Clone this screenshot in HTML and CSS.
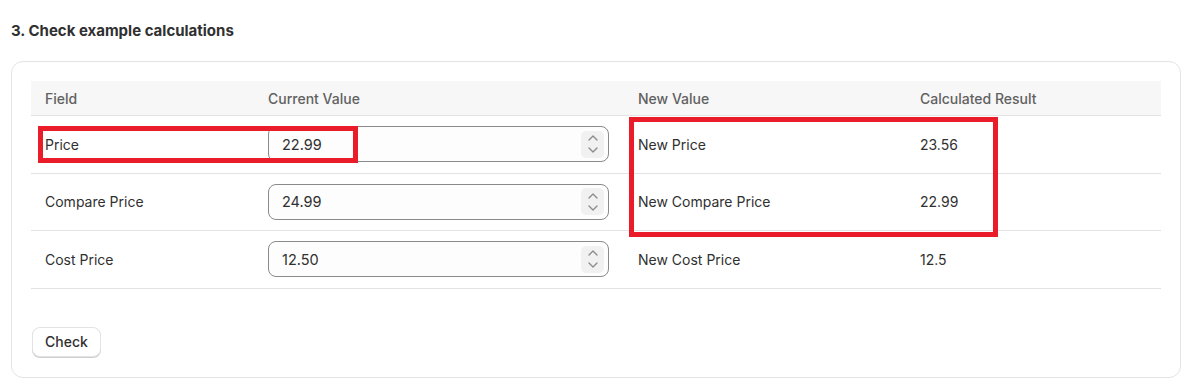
FILE: index.html
```html
<!DOCTYPE html>
<html lang="en">
<head>
    <meta charset="UTF-8">
    <title>Check example calculations</title>
    <link rel="stylesheet" href="styles.css">
</head>
<body>

    <!-- Step 3 -->
    <section class="step">
        <h2 class="step-title">3. Check example calculations</h2>

        <div class="card">
            <div class="table-wrap">
                <table class="calc-table">
                    <colgroup>
                        <col class="col-field">
                        <col class="col-current">
                        <col class="col-new">
                        <col>
                    </colgroup>
                    <thead>
                        <tr>
                            <th>Field</th>
                            <th>Current Value</th>
                            <th>New Value</th>
                            <th>Calculated Result</th>
                        </tr>
                    </thead>
                    <tbody>
                        <tr>
                            <td>Price</td>
                            <td>
                                <div class="num-field">
                                    <input type="text" value="22.99">
                                    <span class="spinner">
                                        <svg width="12" height="8" viewBox="0 0 12 8"><path d="M2 6l4-4 4 4"/></svg>
                                        <svg width="12" height="8" viewBox="0 0 12 8"><path d="M2 2l4 4 4-4"/></svg>
                                    </span>
                                </div>
                            </td>
                            <td>New Price</td>
                            <td>23.56</td>
                        </tr>
                        <tr>
                            <td>Compare Price</td>
                            <td>
                                <div class="num-field">
                                    <input type="text" value="24.99">
                                    <span class="spinner">
                                        <svg width="12" height="8" viewBox="0 0 12 8"><path d="M2 6l4-4 4 4"/></svg>
                                        <svg width="12" height="8" viewBox="0 0 12 8"><path d="M2 2l4 4 4-4"/></svg>
                                    </span>
                                </div>
                            </td>
                            <td>New Compare Price</td>
                            <td>22.99</td>
                        </tr>
                        <tr>
                            <td>Cost Price</td>
                            <td>
                                <div class="num-field">
                                    <input type="text" value="12.50">
                                    <span class="spinner">
                                        <svg width="12" height="8" viewBox="0 0 12 8"><path d="M2 6l4-4 4 4"/></svg>
                                        <svg width="12" height="8" viewBox="0 0 12 8"><path d="M2 2l4 4 4-4"/></svg>
                                    </span>
                                </div>
                            </td>
                            <td>New Cost Price</td>
                            <td>12.5</td>
                        </tr>
                    </tbody>
                </table>

                <!-- annotation boxes -->
                <div class="mark mark-price"></div>
                <div class="mark mark-result"></div>
            </div>

            <div class="actions">
                <button class="btn">Check</button>
            </div>
        </div>
    </section>

</body>
</html>
```

FILE: styles.css
```css
body {
    font-family: 'Inter', 'Liberation Sans', sans-serif;
    margin: 0;
    padding: 0;
    background: #fff;
    color: #303030;
    font-size: 14px;
}

.step {
    padding: 21px 14px 12px 11px;
}

.step-title {
    font-size: 15px;
    font-weight: 650;
    line-height: 20px;
    margin: 0 0 20px;
    color: #303030;
}

.card {
    border: 1px solid #e3e3e3;
    border-radius: 12px;
    padding: 19px 19px 20px;
}

.table-wrap {
    position: relative;
}

.calc-table {
    width: 100%;
    border-collapse: collapse;
    table-layout: fixed;
}

.col-field { width: 223px; }
.col-current { width: 370px; }
.col-new { width: 282px; }

.calc-table th {
    background: #f7f7f7;
    color: #616161;
    font-weight: 500;
    text-align: left;
    height: 34px;
    padding: 0 14px;
    border-bottom: 1px solid #e3e3e3;
}

.calc-table td {
    height: 56.5px;
    padding: 0 15px 0 14px;
    border-bottom: 1px solid #e3e3e3;
}

.num-field {
    display: flex;
    align-items: center;
    height: 34px;
    border: 1px solid #8a8a8a;
    border-radius: 8px;
    background: #fdfdfd;
    padding: 0 4px 0 13px;
}

.num-field input {
    flex: 1;
    border: none;
    background: transparent;
    font-family: inherit;
    font-size: 14.5px;
    color: #303030;
    padding: 0;
    outline: none;
    min-width: 0;
}

.spinner {
    display: flex;
    flex-direction: column;
    align-items: center;
    justify-content: center;
    gap: 4px;
    width: 23px;
    height: 27px;
    background: #f1f1f1;
    border-radius: 5px;
}

.spinner svg {
    display: block;
}

.spinner path {
    fill: none;
    stroke: #8a8a8a;
    stroke-width: 1.3;
    stroke-linecap: round;
    stroke-linejoin: round;
}

.mark {
    position: absolute;
    border: 5px solid #ea1c2a;
}

.mark-price {
    left: 7px;
    top: 45px;
    width: 310px;
    height: 27px;
}

.mark-result {
    left: 598px;
    top: 36px;
    width: 359px;
    height: 110px;
}

.actions {
    margin-top: 38px;
}

.btn {
    font-family: inherit;
    font-size: 14px;
    font-weight: 500;
    color: #303030;
    background: #fff;
    border: 1px solid #e3e3e3;
    border-radius: 8px;
    box-shadow: 0 1px 0 #cfcfcf;
    height: 30px;
    padding: 0 12px;
    margin-left: 1px;
    cursor: pointer;
}
```
